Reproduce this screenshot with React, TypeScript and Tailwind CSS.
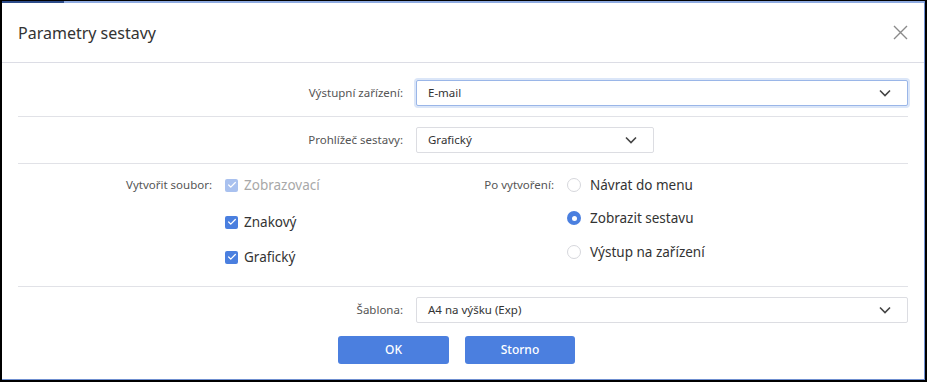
import { Check } from 'lucide-react';

const font = { fontFamily: '"Segoe UI", "Noto Sans", "Open Sans", sans-serif' };

function Chevron() {
  return (
    <svg width="12" height="8" viewBox="0 0 12 8" aria-hidden="true" className="shrink-0">
      <polyline points="1,1.5 6,6.5 11,1.5" fill="none" stroke="#444" strokeWidth="1.6" />
    </svg>
  );
}

function Select({ value, focused, className }: { value: string; focused?: boolean; className?: string }) {
  return (
    <div
      className={`flex h-[26px] items-center justify-between rounded-[2px] border bg-white pl-[11px] pr-[16px] text-[11.5px] text-[#333] ${
        focused ? 'border-[#9ab6e8] shadow-[0_0_0_2px_#dbe6f8]' : 'border-[#dcdde2]'
      } ${className ?? ''}`}
    >
      <span>{value}</span>
      <Chevron />
    </div>
  );
}

function FieldRow({ label, children, className }: { label: string; children: React.ReactNode; className?: string }) {
  return (
    <div className={`mx-[16px] flex items-center border-b border-[#e1e2e7] ${className ?? ''}`}>
      <div className="w-[385px] shrink-0 text-right text-[11.5px] text-[#555]">{label}</div>
      <div className="ml-[13px] flex-1">{children}</div>
    </div>
  );
}

function CheckBox({ label, disabled, className }: { label: string; disabled?: boolean; className?: string }) {
  return (
    <div className={`flex h-[22px] items-center gap-[6px] ${className ?? ''}`}>
      <span
        className={`flex h-[13px] w-[13px] items-center justify-center rounded-[2px] ${disabled ? 'bg-[#a9c1ef]' : 'bg-[#4a7fdf]'}`}
      >
        <Check size={10} strokeWidth={3} color="white" />
      </span>
      <span className={`text-[13.5px] ${disabled ? 'text-[#a8a8a8]' : 'text-[#333]'}`}>{label}</span>
    </div>
  );
}

function Radio({ label, checked, className }: { label: string; checked?: boolean; className?: string }) {
  return (
    <div className={`flex h-[22px] items-center gap-[9px] ${className ?? ''}`}>
      {checked ? (
        <span className="flex h-[14px] w-[14px] items-center justify-center rounded-full bg-[#4a7fdf]">
          <span className="h-[5px] w-[5px] rounded-full bg-white" />
        </span>
      ) : (
        <span className="h-[14px] w-[14px] rounded-full border border-[#d6d7dc] bg-white" />
      )}
      <span className="text-[13.5px] text-[#333]">{label}</span>
    </div>
  );
}

export default function App() {
  return (
    <div className="h-[382px] w-[927px] bg-black pb-[2px] pl-[2px] pr-[2px] pt-[1px]" style={font}>
      <div className="flex h-full flex-col border-b border-r border-[#6f8fd0] bg-white">
        <div className="flex h-[2px] shrink-0">
          <div className="w-[62px] bg-[#2d4c8a]" />
          <div className="flex-1 bg-[#8eaae0]" />
        </div>

        <div className="flex h-[60px] shrink-0 items-center justify-between border-b border-[#dcdde5] pl-[16px] pr-[16px]">
          <h1 className="text-[16px] text-[#333]">Parametry sestavy</h1>
          <svg width="15" height="15" viewBox="0 0 15 15" aria-hidden="true">
            <path d="M1 1 14 14 M14 1 1 14" stroke="#8a8a8a" strokeWidth="1.4" />
          </svg>
        </div>

        <FieldRow label="Výstupní zařízení:" className="pb-[10px] pt-[17px]">
          <Select value="E-mail" focused />
        </FieldRow>

        <FieldRow label="Prohlížeč sestavy:" className="py-[10px]">
          <Select value="Grafický" className="w-[238px]" />
        </FieldRow>

        <div className="mx-[16px] flex border-b border-[#e1e2e7] pb-[18px] pt-[10px]">
          <div className="flex w-[398px] shrink-0 items-start">
            <div className="h-[22px] w-[194px] shrink-0 text-right text-[11.5px] leading-[22px] text-[#555]">Vytvořit soubor:</div>
            <div className="ml-[13px] flex flex-col">
              <CheckBox label="Zobrazovací" disabled />
              <CheckBox label="Znakový" className="mt-[15px]" />
              <CheckBox label="Grafický" className="mt-[13px]" />
            </div>
          </div>
          <div className="flex items-start">
            <div className="h-[22px] w-[138px] shrink-0 text-right text-[11.5px] leading-[22px] text-[#555]">Po vytvoření:</div>
            <div className="ml-[13px] flex flex-col">
              <Radio label="Návrat do menu" />
              <Radio label="Zobrazit sestavu" checked className="mt-[11px]" />
              <Radio label="Výstup na zařízení" className="mt-[12px]" />
            </div>
          </div>
        </div>

        <div className="mx-[16px] flex items-center pt-[10px]">
          <div className="w-[385px] shrink-0 text-right text-[11.5px] text-[#555]">Šablona:</div>
          <div className="ml-[13px] flex-1">
            <Select value="A4 na výšku (Exp)" />
          </div>
        </div>

        <div className="mt-[13px] flex gap-[16px] pl-[336px]">
          <button className="h-[28px] w-[111px] rounded-[3px] bg-[#4b7fdf] text-[12px] font-medium text-white">OK</button>
          <button className="h-[28px] w-[110px] rounded-[3px] bg-[#4b7fdf] text-[12px] font-medium text-white">Storno</button>
        </div>
      </div>
    </div>
  );
}
